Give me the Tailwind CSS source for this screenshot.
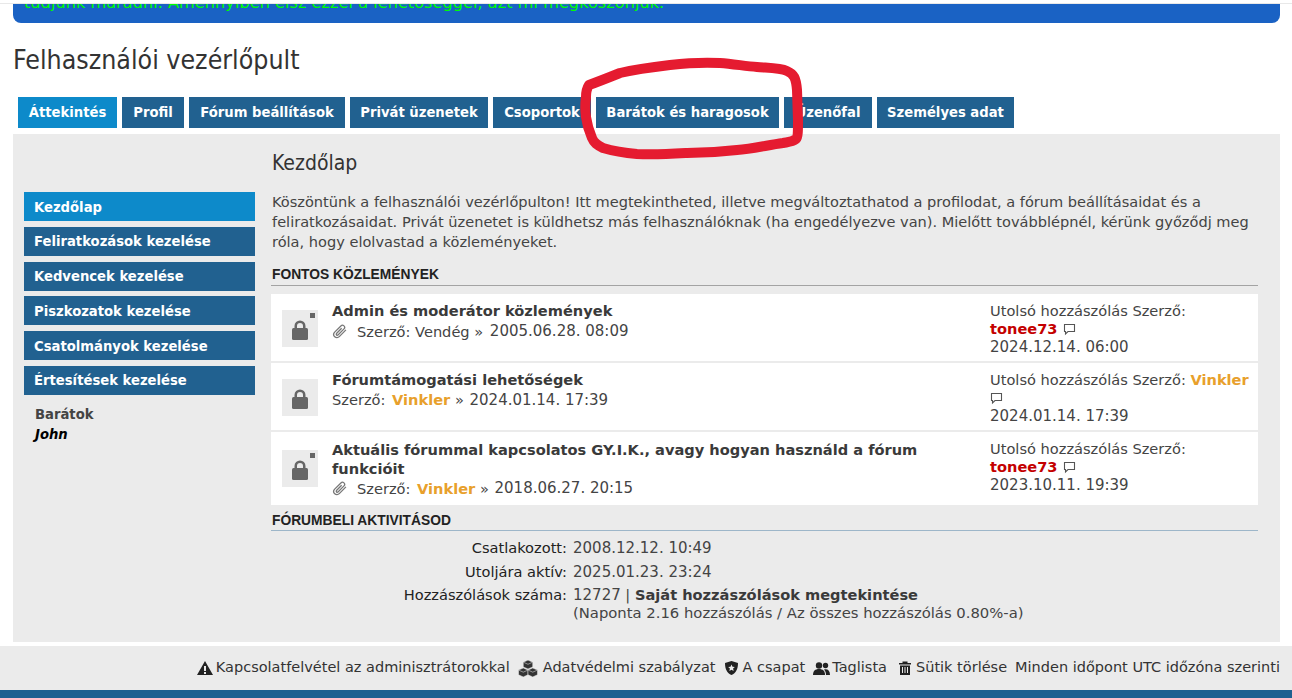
<!DOCTYPE html>
<html lang="hu">
  <head>
    <meta charset="UTF-8" />
    <title>Felhasználói vezérlőpult</title>
    <script src="https://cdn.jsdelivr.net/npm/@tailwindcss/browser@4"></script>
  </head>
  <body class="relative h-[698px] overflow-hidden bg-white font-['DejaVu_Sans',sans-serif] text-[14.6px] text-[#444]">
    <div class="h-[4px] border-b border-[#e8e8e8]"></div>
    <!-- top banner, scrolled off -->
    <div class="ml-[13px] mr-[12px] h-[19px] overflow-hidden rounded-b-lg bg-[#1a62c4] px-[11px]">
      <p class="mt-[-11px] whitespace-nowrap text-[16.2px] leading-[20px] text-[#0f0]">tudjunk maradni. Amennyiben élsz ezzel a lehetőséggel, azt mi megköszönjük.</p>
    </div>

    <h1 class="mx-[13px] mt-[21px] h-[32px] font-['DejaVu_Sans_Condensed',sans-serif] text-[26.5px] leading-[32px] text-[#333]">Felhasználói vezérlőpult</h1>

    <nav class="ml-[18px] mt-[21px] flex h-[31px] gap-[5px] text-[13.2px] font-bold text-white">
      <a class="flex w-[99px] items-center justify-center bg-[#0d8aca]">Áttekintés</a>
      <a class="flex w-[62px] items-center justify-center bg-[#216190]">Profil</a>
      <a class="flex w-[156px] items-center justify-center bg-[#216190]">Fórum beállítások</a>
      <a class="flex w-[138px] items-center justify-center bg-[#216190]">Privát üzenetek</a>
      <a class="flex w-[98px] items-center justify-center bg-[#216190]">Csoportok</a>
      <a class="flex w-[183px] items-center justify-center bg-[#216190]">Barátok és haragosok</a>
      <a class="flex w-[88px] items-center justify-center bg-[#216190]">Üzenőfal</a>
      <a class="flex w-[137px] items-center justify-center bg-[#216190]">Személyes adat</a>
    </nav>

    <main class="ml-[13px] mr-[12px] mt-[6px] flex h-[508px] bg-[#ebebeb] pl-[11px] pr-[22px]">
      <aside class="mt-[58px] w-[231px] shrink-0 text-[13.2px] font-bold text-white">
        <a class="mb-[6px] flex h-[29px] items-center bg-[#0d8aca] px-[10px] pt-[2px]">Kezdőlap</a>
        <a class="mb-[6px] flex h-[29px] items-center bg-[#216190] px-[10px]">Feliratkozások kezelése</a>
        <a class="mb-[5px] flex h-[29px] items-center bg-[#216190] px-[10px]">Kedvencek kezelése</a>
        <a class="mb-[6px] flex h-[29px] items-center bg-[#216190] px-[10px] pt-[2px]">Piszkozatok kezelése</a>
        <a class="mb-[6px] flex h-[29px] items-center bg-[#216190] px-[10px] pt-[2px]">Csatolmányok kezelése</a>
        <a class="flex h-[29px] items-center bg-[#216190] px-[10px]">Értesítések kezelése</a>
        <p class="mt-[10px] pl-[11px] text-[13.2px] leading-[20px] text-[#444]">Barátok</p>
        <p class="pl-[11px] text-[13.2px] italic leading-[20px] text-black">John</p>
      </aside>

      <section class="ml-[16px] min-w-0 flex-1">
        <h2 class="mt-[16px] h-[26px] pl-[1px] font-['DejaVu_Sans_Condensed',sans-serif] text-[21px] leading-[26px] text-[#333]">Kezdőlap</h2>
        <p class="mt-[16px] pl-[1px] text-[14.57px] leading-[20px]">Köszöntünk a felhasználói vezérlőpulton! Itt megtekintheted, illetve megváltoztathatod a profilodat, a fórum beállításaidat és a feliratkozásaidat. Privát üzenetet is küldhetsz más felhasználóknak (ha engedélyezve van). Mielőtt továbblépnél, kérünk győződj meg róla, hogy elolvastad a közleményeket.</p>

        <h3 class="mt-[14px] border-b border-[#a3a3a3] pb-[2px] pl-[1px] font-['Liberation_Sans',sans-serif] text-[13.8px] font-bold uppercase leading-[17px] text-[#222]">Fontos közlemények</h3>

        <div class="mt-[8px] bg-white">
          <div class="flex h-[69px] border-b-2 border-[#ebebeb]">
            <div class="relative ml-[11px] mt-[16px] flex h-[37px] w-[36px] shrink-0 items-center justify-center bg-[#ebebeb]">
              <svg width="16" height="20" viewBox="0 0 16 20" class="mt-[2px]" fill="#666"><path d="M2.500 9V6a5.500 5.500 0 0 1 11 0v3h-2.500V6a3 3 0 0 0-6 0v3z"/><rect y="8" width="16" height="12" rx="1.500"/></svg>
              <span class="absolute right-[3px] top-[3px] size-[5px] bg-[#666]"></span>
            </div>
            <div class="ml-[14px] mt-[7px] flex-1">
              <p class="text-[14.6px] font-bold leading-[20px] text-[#3a3a3a]">Admin és moderátor közlemények</p>
              <p class="mt-[1px] flex items-center leading-[19px]">
                <svg width="15" height="15" viewBox="0 0 14 14" class="mr-[10px]" fill="none" stroke="#777" stroke-width="1.200"><path d="M13 5.500 6.800 11.800a3 3 0 0 1-4.300-4.200L8.300 1.800a2 2 0 0 1 2.900 2.800L5.600 10.300a1 1 0 0 1-1.400-1.400L9 4"/></svg>
                Szerző: Vendég »&nbsp;<span class="ml-[2px] text-[15px]">2005.06.28. 08:09</span></p>
            </div>
            <div class="w-[268px] shrink-0 pt-[8px] leading-[18px]">
              <p>Utolsó hozzászólás Szerző:</p>
              <p class="flex items-center"><b class="text-[#c40000]">tonee73</b><svg width="13" height="13" viewBox="0 0 13 13" class="ml-[5px]" fill="none" stroke="#555" stroke-width="1.100"><path d="M1.500 1.500h10v7H5l-2.500 2.500V8.500h-1z"/></svg></p>
              <p class="text-[15px]">2024.12.14. 06:00</p>
            </div>
          </div>
          <div class="flex h-[69px] border-b-2 border-[#ebebeb]">
            <div class="ml-[11px] mt-[16px] flex h-[37px] w-[36px] shrink-0 items-center justify-center bg-[#ebebeb]">
              <svg width="16" height="20" viewBox="0 0 16 20" class="mt-[2px]" fill="#666"><path d="M2.500 9V6a5.500 5.500 0 0 1 11 0v3h-2.500V6a3 3 0 0 0-6 0v3z"/><rect y="8" width="16" height="12" rx="1.500"/></svg>
            </div>
            <div class="ml-[14px] mt-[7px] flex-1">
              <p class="text-[14.6px] font-bold leading-[20px] text-[#3a3a3a]">Fórumtámogatási lehetőségek</p>
              <p class="leading-[19px]">Szerző: <b class="ml-[2px] text-[#e8a02c]">Vinkler</b> » <span class="ml-[1px] text-[15px]">2024.01.14. 17:39</span></p>
            </div>
            <div class="w-[268px] shrink-0 pt-[8px] leading-[18px]">
              <p class="whitespace-nowrap">Utolsó hozzászólás Szerző: <b class="text-[#e8a02c]">Vinkler</b></p>
              <p class="flex h-[18px] items-center"><svg width="13" height="13" viewBox="0 0 13 13" fill="none" stroke="#555" stroke-width="1.100"><path d="M1.500 1.500h10v7H5l-2.500 2.500V8.500h-1z"/></svg></p>
              <p class="text-[15px]">2024.01.14. 17:39</p>
            </div>
          </div>
          <div class="flex h-[73px]">
            <div class="relative ml-[11px] mt-[18px] flex h-[37px] w-[36px] shrink-0 items-center justify-center bg-[#ebebeb]">
              <svg width="16" height="20" viewBox="0 0 16 20" class="mt-[2px]" fill="#666"><path d="M2.500 9V6a5.500 5.500 0 0 1 11 0v3h-2.500V6a3 3 0 0 0-6 0v3z"/><rect y="8" width="16" height="12" rx="1.500"/></svg>
              <span class="absolute right-[3px] top-[3px] size-[5px] bg-[#666]"></span>
            </div>
            <div class="ml-[14px] mt-[8px] flex-1">
              <p class="max-w-[600px] text-[14.6px] font-bold leading-[19px] text-[#3a3a3a]">Aktuális fórummal kapcsolatos GY.I.K., avagy hogyan használd a fórum funkcióit</p>
              <p class="mt-[1px] flex items-center leading-[19px]">
                <svg width="15" height="15" viewBox="0 0 14 14" class="mr-[10px]" fill="none" stroke="#777" stroke-width="1.200"><path d="M13 5.500 6.800 11.800a3 3 0 0 1-4.300-4.200L8.300 1.800a2 2 0 0 1 2.900 2.800L5.600 10.300a1 1 0 0 1-1.400-1.400L9 4"/></svg>
                Szerző:&nbsp;<b class="ml-[2px] text-[#e8a02c]">Vinkler</b>&nbsp;»&nbsp;<span class="ml-[1px] text-[15px]">2018.06.27. 20:15</span></p>
            </div>
            <div class="w-[268px] shrink-0 pt-[8px] leading-[18px]">
              <p>Utolsó hozzászólás Szerző:</p>
              <p class="flex items-center"><b class="text-[#c40000]">tonee73</b><svg width="13" height="13" viewBox="0 0 13 13" class="ml-[5px]" fill="none" stroke="#555" stroke-width="1.100"><path d="M1.500 1.500h10v7H5l-2.500 2.500V8.500h-1z"/></svg></p>
              <p class="text-[15px]">2023.10.11. 19:39</p>
            </div>
          </div>
        </div>

        <h3 class="mt-[7px] border-b border-[#9db6c9] pb-[1px] pl-[1px] font-['Liberation_Sans',sans-serif] text-[13.8px] font-bold uppercase leading-[17px] text-[#222]">Fórumbeli aktivitásod</h3>

        <dl class="mt-[8px] grid grid-cols-[296px_1fr] gap-x-[6px] leading-[18px]">
          <dt class="pb-[6px] text-right text-[#222]">Csatlakozott:</dt>
          <dd class="pb-[6px] text-[15px]">2008.12.12. 10:49</dd>
          <dt class="pb-[5px] text-right text-[#222]">Utoljára aktív:</dt>
          <dd class="pb-[5px] text-[15px]">2025.01.23. 23:24</dd>
          <dt class="text-right text-[#222]">Hozzászólások száma:</dt>
          <dd><span class="text-[15px]">12727</span> | <b class="text-[#3a3a3a]">Saját hozzászólások megtekintése</b><br /><span class="text-[14.8px]">(Naponta 2.16 hozzászólás / Az összes hozzászólás 0.80%-a)</span></dd>
        </dl>
      </section>
    </main>

    <footer class="mt-[4px] flex h-[44px] items-center justify-end gap-[8px] bg-[#ebebeb] pr-[12px] text-[14.5px] text-[#333]">
      <span class="flex items-center gap-[3px]"><svg width="16" height="14" viewBox="0 0 16 14" fill="#222"><path d="M8 0 16 14H0zM7 5v5h2V5zm0 6v2h2v-2z" fill-rule="evenodd"/></svg>Kapcsolatfelvétel az adminisztrátorokkal</span>
      <span class="flex items-center gap-[5px]"><svg width="20" height="17" viewBox="0 0 19 16" fill="#333" stroke="#ebebeb" stroke-width="0.500"><path d="M9.500 0l4.500 2v4.500l-4.500 2-4.500-2V2z"/><path d="M5 7.500l4.500 2v4.500l-4.500 2-4.500-2V9.500z"/><path d="M14 7.500l4.500 2v4.500l-4.500 2-4.500-2V9.500z"/><path d="M5.500 2.200l4 1.800 4-1.800M1 9.700l4 1.800 4-1.800M10 9.700l4 1.800 4-1.800" fill="none"/></svg>Adatvédelmi szabályzat</span>
      <span class="ml-[1px] flex items-center gap-[5px]"><svg width="13" height="14" viewBox="0 0 13 14" fill="#222"><path fill-rule="evenodd" d="M6.500 0 13 2c0 6-2 10-6.500 12C2 12 0 8 0 2zM6.500 3.500l1 2.200 2.300.3-1.700 1.600.5 2.300-2.100-1.200-2.100 1.200.5-2.300L3.200 6l2.300-.3z"/></svg>A csapat</span>
      <span class="flex items-center gap-[2px]"><svg width="17" height="13" viewBox="0 0 17 13" fill="#222"><circle cx="6" cy="3.500" r="3.200"/><path d="M0 13c0-4 2-6 6-6s6 2 6 6z"/><circle cx="12.500" cy="3.500" r="2.700"/><path d="M13 13c0-2-.5-4-2-5.500 3.500-1 6 1 6 5.500z"/></svg>Taglista</span>
      <span class="ml-[4px] flex items-center gap-[5px]"><svg width="12" height="14" viewBox="0 0 12 14" fill="#222"><path fill-rule="evenodd" d="M0 2h3.500V.500h5V2H12v1.500H0zM1 4.500h10V14H1zM3 6v6h1V6zM5.500 6v6h1V6zM8 6v6h1V6z"/></svg>Sütik törlése</span>
      <span>Minden időpont UTC időzóna szerinti</span>
    </footer>
    <div class="h-[20px] bg-[#1f6090]"></div>

    <!-- hand-drawn marker circle on top of the screenshot -->
    <svg class="pointer-events-none absolute left-[570px] top-[50px]" width="250" height="120" viewBox="0 0 250 120" fill="none" stroke="#e51b30" stroke-width="10" stroke-linecap="round" stroke-linejoin="round"><path d="M19 35C30 31 40 27 50 23C67 19 83 17 100 15C117 13 133 12 150 13C163 14 175 16 187 17C198 18 210 18 217 21C224 24 226 28 227 40L228 70C228 80 228 87 226 89C222 92 218 92 213 93C198 95 182 99 167 100C150 102 134 103 117 103C100 104 84 105 67 104C55 103 43 101 33 98C27 95 24 93 22 88C19 81 17 74 16 67C15 60 15 54 16 47C16 42 17 38 19 35Z"/></svg>
  </body>
</html>
